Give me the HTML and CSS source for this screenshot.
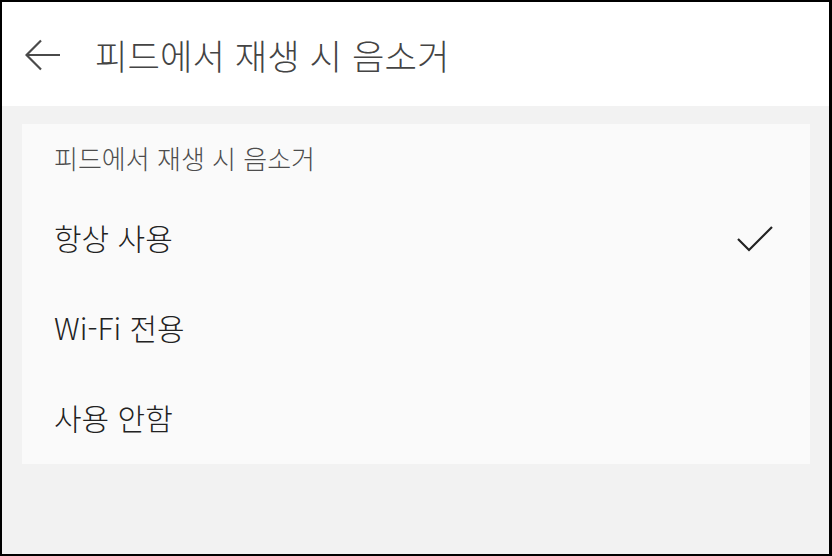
FILE: index.html
```html
<!DOCTYPE html>
<html lang="ko">
<head>
<meta charset="utf-8">
<title>피드에서 재생 시 음소거</title>
<link rel="stylesheet" href="styles.css">
</head>
<body>
<div class="frame">
  <header class="topbar">
    <svg class="back" width="36" height="32" viewBox="0 0 36 32" aria-hidden="true">
      <path d="M16 1.5 L1.5 16 L16 30.5 M1.5 16 H35" fill="none" stroke="#4a4a4a" stroke-width="2.2" stroke-linecap="butt" stroke-linejoin="miter"/>
    </svg>
    <h1 class="title">피드에서 재생 시 음소거</h1>
  </header>
  <main class="content">
    <section class="card">
      <div class="card-head">피드에서 재생 시 음소거</div>
      <div class="option">
        <span>항상 사용</span>
        <svg class="check" width="36" height="26" viewBox="0 0 36 26" aria-hidden="true">
          <path d="M1 13 L12 24 L35 1" fill="none" stroke="#222" stroke-width="2.2"/>
        </svg>
      </div>
      <div class="option"><span>Wi-Fi 전용</span></div>
      <div class="option"><span>사용 안함</span></div>
    </section>
  </main>
</div>
</body>
</html>
```
FILE: styles.css
```css
html, body {
  margin: 0;
  padding: 0;
  background: #000;
}
.frame {
  box-sizing: border-box;
  width: 832px;
  height: 556px;
  border-style: solid;
  border-color: #000;
  border-width: 2px 3px 2px 2px;
  display: flex;
  flex-direction: column;
  background: #f2f2f2;
  font-family: "Noto Sans CJK KR", "Noto Sans", sans-serif;
  font-weight: 300;
}
.topbar {
  height: 104px;
  flex: none;
  background: #fff;
  display: flex;
  align-items: center;
  padding-left: 23px;
}
.back {
  display: block;
  margin-top: 1px;
}
.title {
  margin: 2px 0 0 34px;
  font-size: 35.3px;
  font-weight: 300;
  color: #444;
  line-height: 1;
}
.content {
  flex: 1;
  padding: 18px 19px 0 20px;
}
.card {
  background: #fafafa;
  height: 340px;
  display: flex;
  flex-direction: column;
}
.card-head {
  box-sizing: border-box;
  height: 70px;
  display: flex;
  align-items: center;
  padding: 0 0 3px 32px;
  font-size: 26px;
  color: #4d4d4d;
}
.option {
  box-sizing: border-box;
  height: 90px;
  display: flex;
  align-items: center;
  justify-content: space-between;
  padding: 0 37px 4px 32px;
  font-size: 30px;
  color: #222;
}
.check {
  display: block;
  margin-top: 4px;
}
```
